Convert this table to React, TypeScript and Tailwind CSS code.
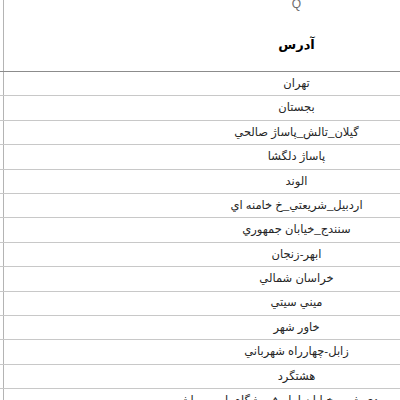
const rows = [
  'تهران',
  'بجستان',
  'گيلان_تالش_پاساژ صالحي',
  'پاساژ دلگشا',
  'الوند',
  'اردبيل_شريعتي_خ خامنه اي',
  'سنندج_خيابان جمهوري',
  'ابهر-زنجان',
  'خراسان شمالي',
  'ميني سيتي',
  'خاور شهر',
  'زابل-چهارراه شهرباني',
  'هشتگرد',
  'پرديس بيدي شهر_خيابان امام فروشگاه پارسي باشي',
]

export default function App() {
  return (
    <div className="w-[400px] h-[400px] overflow-hidden bg-white font-['Liberation_Sans','DejaVu_Sans',sans-serif]">
      <div className="w-[590px]">
        {/* header cell with column letter */}
        <div className="flex h-[72px] border-b border-[#8c8c8c]">
          <div className="w-[3px] shrink-0" />
          <div className="w-[586px] border-l border-[#b4b4b4] flex flex-col items-center">
            <div className="text-[12px] leading-none text-[#6b6b6b] -mt-[2px]">Q</div>
            <div dir="rtl" className="mt-[25px] text-[13px] font-bold text-black">
              آدرس
            </div>
          </div>
        </div>

        {rows.map((r, i) => (
          <div key={i} className="flex h-[24.4px] border-b border-[#c8c8c8]">
            <div className="w-[3px] shrink-0" />
            <div className="w-[586px] border-l border-[#b4b4b4] flex items-center justify-center">
              <span dir="rtl" className="text-[11.5px] leading-none text-[#262626]">
                {r}
              </span>
            </div>
          </div>
        ))}
      </div>
    </div>
  )
}
